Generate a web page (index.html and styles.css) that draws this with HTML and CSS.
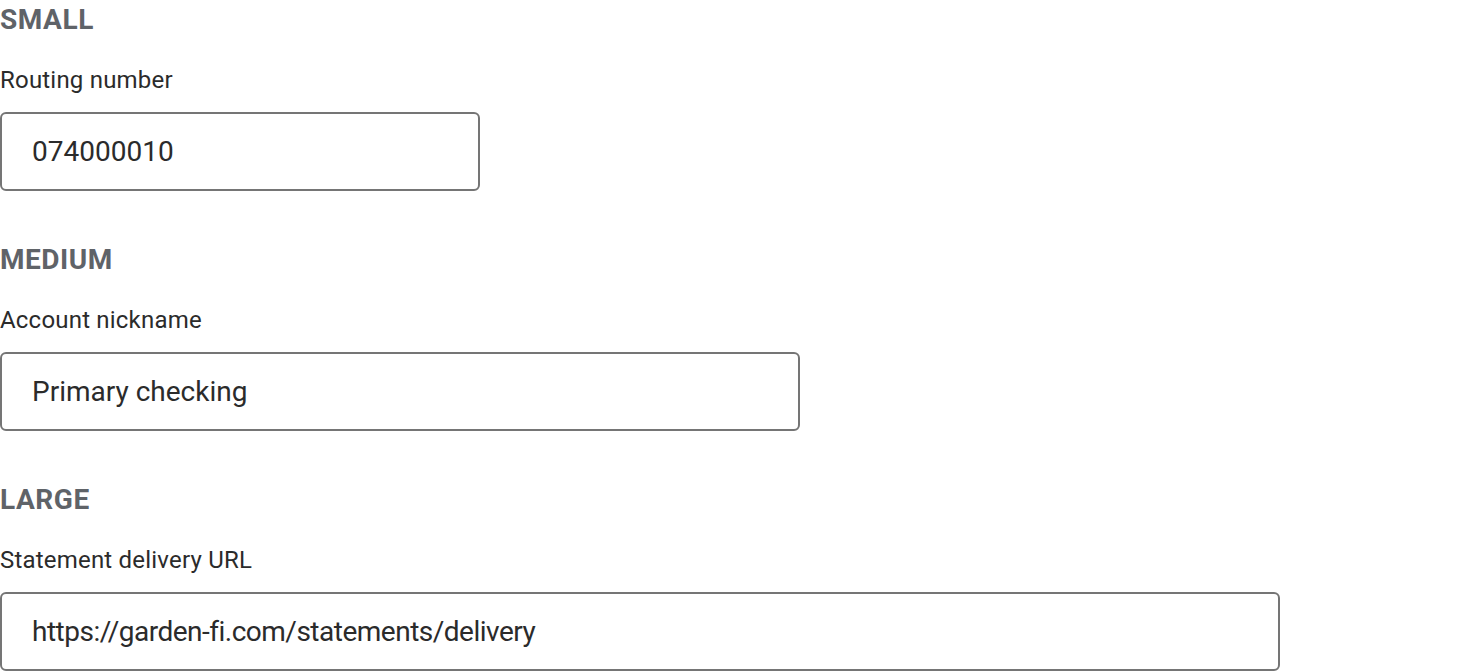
FILE: index.html
```html
<!DOCTYPE html>
<html lang="en">
<head>
<meta charset="utf-8">
<title>Text field sizes</title>
<link rel="stylesheet" href="styles.css">
</head>
<body>
  <main class="page">
    <section class="variant">
      <h2 class="variant-title">SMALL</h2>
      <label class="field-label" for="routing">Routing number</label>
      <input class="field field-small" id="routing" type="text" value="074000010">
    </section>
    <section class="variant">
      <h2 class="variant-title">MEDIUM</h2>
      <label class="field-label" for="nickname">Account nickname</label>
      <input class="field field-medium" id="nickname" type="text" value="Primary checking">
    </section>
    <section class="variant">
      <h2 class="variant-title">LARGE</h2>
      <label class="field-label" for="url">Statement delivery URL</label>
      <input class="field field-large" id="url" type="text" value="https://garden-fi.com/statements/delivery">
    </section>
  </main>
</body>
</html>
```

FILE: styles.css
```css
html, body {
  margin: 0;
  padding: 0;
  background: #ffffff;
}

body {
  font-family: Roboto, "Liberation Sans", Arial, sans-serif;
  color: #2b2b2b;
}

.page {
  display: flex;
  flex-direction: column;
  gap: 49px;
}

.variant {
  display: flex;
  flex-direction: column;
  align-items: flex-start;
}

.variant-title {
  margin: 0;
  font-size: 28px;
  line-height: 40px;
  font-weight: 700;
  letter-spacing: 0.55px;
  color: #5f6368;
}

.field-label {
  display: block;
  margin-top: 25px;
  font-size: 24px;
  line-height: 30px;
  letter-spacing: 0.2px;
  color: #2b2b2b;
}

.field {
  box-sizing: border-box;
  margin-top: 17px;
  height: 79px;
  padding: 0 30px;
  border: 2px solid #757575;
  border-radius: 6px;
  background: #ffffff;
  font-family: Roboto, "Liberation Sans", Arial, sans-serif;
  font-size: 28px;
  color: #2b2b2b;
  outline: none;
}

.field-small { width: 480px; }
.field-medium { width: 800px; }
.field-large {
  width: 1280px;
  letter-spacing: -0.5px;
}
```
